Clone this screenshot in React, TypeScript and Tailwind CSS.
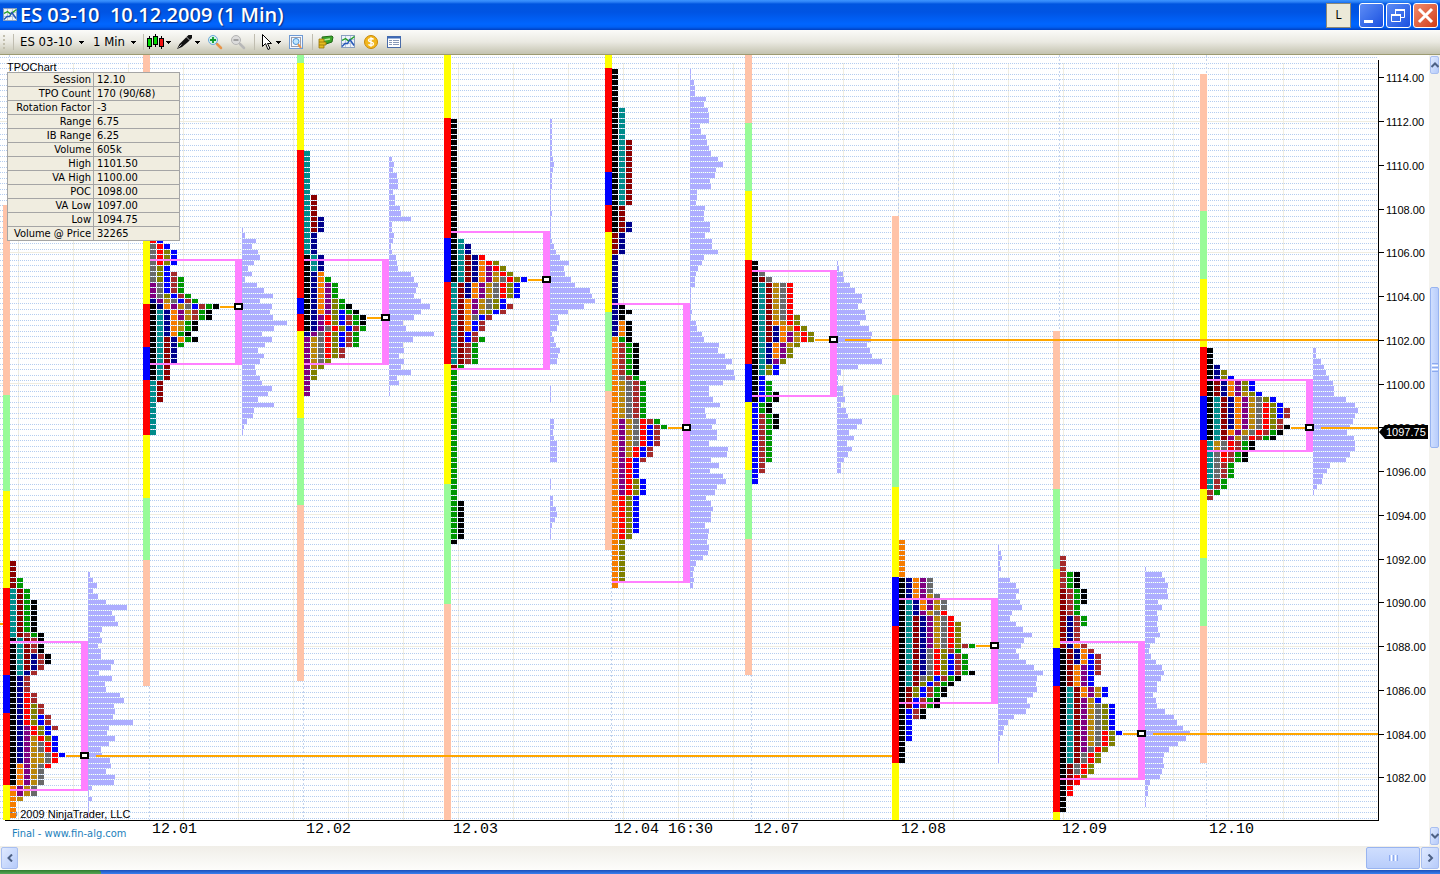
import type { ReactNode } from "react";

interface Session {
    label: string;
    x: number;
    strip: [string, number][];
    stripTop: number;
    firstRow: number;
    rows: string;
    volumeX: number;
    volumeRow: number;
    volume: number[];
    va: [number, number];
    pocRow: number;
    pocEnd?: number | string;
}

const TICK = 5.46875;
const BASE = 77.5;
const PLOT_TOP = 55;
const PLOT_BOTTOM = 820;

// one colour per half hour letter
const TPO: Record<string, string> = {
    K: "#000000",
    T: "#008b8b",
    M: "#8b0000",
    N: "#00008b",
    O: "#f57c00",
    P: "#800080",
    G: "#b8860b",
    S: "#696969",
    R: "#ff0000",
    L: "#808000",
    B: "#0000ff",
    W: "#a52a2a",
    E: "#009600",
};

const STRIP: Record<string, string> = {
    peach: "#ffc3a8",
    green: "#98fb98",
    yellow: "#ffff00",
    red: "#ff0000",
    blue: "#0000ff",
};

const SESSIONS: Session[] = [
    {
        label: "",
        x: 10,
        stripTop: 205,
        strip: [["peach", 395], ["green", 491], ["yellow", 588], ["red", 675], ["blue", 713], ["red", 785], ["yellow", 820]],
        firstRow: 89,
        rows: "M*3 ME*2 TME*2 TMEK*6 TMWEK KTMWK*3 KTMNWK*2 KTMNW KTNW KNW*3 KNRW*2 KNRLW*2 KNRLBW*2 KNPRLBW KNPRLB KNPGRLB KNPGSRB*2 KNPGGSRB KNPGGSR KOPGSR KOPGS*3 OPGS*2 OG O*3",
        volumeX: 88,
        volumeRow: 91,
        volume: [2, 5, 9, 5, 10, 18, 39, 24, 27, 30, 14, 12, 14, 10, 13, 13, 26, 23, 11, 24, 17, 18, 32, 36, 26, 27, 25, 45, 21, 19, 27, 21, 13, 14, 22, 23, 18, 27, 26, 4, 1, 4, 1, 1, 1],
        va: [641, 791],
        pocRow: 124,
        pocEnd: 892,
    },
    {
        label: "12.01",
        x: 150,
        stripTop: 55,
        strip: [["peach", 150], ["yellow", 304], ["red", 347], ["blue", 380], ["red", 435], ["yellow", 498], ["green", 560], ["peach", 686]],
        firstRow: 30,
        rows: "RB SRB SRLB*3 SLB SLBW SLBWE PSBWE*2 PSLBWE NPGSBWE KNOPGSBWEK KTNOPGWEK*2 KTNOGEK*2 KTNOEK KTMNOEK KTMNE KTMN*3 KTM*3 TM*4 T*6",
        volumeX: 242,
        volumeRow: 28,
        volume: [1, 3, 14, 10, 16, 18, 12, 6, 10, 3, 15, 22, 31, 18, 30, 28, 31, 45, 32, 20, 30, 23, 16, 22, 18, 13, 14, 18, 20, 30, 26, 16, 32, 12, 11, 5, 2, 1],
        va: [259, 365],
        pocRow: 42,
    },
    {
        label: "12.02",
        x: 304,
        stripTop: 55,
        strip: [["green", 63], ["yellow", 150], ["red", 298], ["blue", 314], ["red", 331], ["yellow", 418], ["green", 505], ["peach", 681]],
        firstRow: 14,
        rows: "T*8 TM*4 TMN*3 TN*4 KTN*3 KNO KNOE KNOPE*3 KNOPLE KNOPLEK KNOPLBEK KNPRLBWEK*2 KNPSRLBWE NPSRLBWE PGSRLBWE*2 PGSRLW*2 PGSL PGL PL*2 P*3",
        volumeX: 389,
        volumeRow: 15,
        volume: [3, 5, 4, 8, 9, 9, 4, 6, 6, 11, 12, 22, 3, 3, 5, 4, 2, 3, 7, 8, 9, 22, 25, 29, 27, 25, 32, 41, 32, 25, 14, 17, 45, 24, 14, 15, 10, 15, 12, 22, 8, 10, 1, 1],
        va: [259, 365],
        pocRow: 44,
    },
    {
        label: "12.03",
        x: 451,
        stripTop: 55,
        strip: [["yellow", 118], ["red", 238], ["blue", 282], ["red", 364], ["yellow", 484], ["green", 604], ["peach", 820]],
        firstRow: 8,
        rows: "K*22 KT KTN*2 KTMNR KTMNORL KTMNOPRL KTMNOPGRL KTMNOPGSRLB TMNOPGSRLB*3 TMOPGSLB TMOPGSLBW TMOPGLBW TMOSBW TMOBW*2 TMBW TMBWE TMWE*4 ME E*24 EK*7 K",
        volumeX: 550,
        volumeRow: 8,
        volume: [2, 2, 2, 2, 2, 2, 2, 3, 4, 3, 2, 2, 2, 1, 1, 1, 1, 2, 1, 1, 1, 1, 2, 4, 6, 10, 19, 14, 15, 21, 25, 40, 42, 45, 34, 18, 8, 9, 7, 2, 4, 6, 10, 8, 7, 0, 0, 0, 0, 1, 1, 1, 0, 0, 0, 4, 4, 3, 4, 7, 7, 7, 7, 0, 0, 0, 1, 1, 0, 3, 3, 6, 7, 5, 2, 1, 1],
        va: [231, 370],
        pocRow: 37,
    },
    {
        label: "12.04 16:30",
        x: 612,
        stripTop: 55,
        strip: [["yellow", 68], ["red", 172], ["blue", 205], ["red", 232], ["yellow", 312], ["green", 391], ["peach", 550]],
        firstRow: -1,
        rows: "K*7 KT*6 KTM*12 KM*3 KMN*2 MN*4 N*9 NK NKK NK NOK*3 OEK OWEK*6 OSWE OGSWE*7 OPGSRWE OPGSRBWE OPGSRBW*3 OPGRBW*2 OPRBW OPRB*3 OPRLB*3 ORLB*7 ORL OL*8 O",
        volumeX: 690,
        volumeRow: -1,
        volume: [1, 1, 4, 5, 5, 16, 14, 18, 19, 19, 10, 11, 16, 17, 19, 21, 28, 33, 26, 25, 20, 21, 7, 7, 6, 15, 14, 14, 20, 20, 15, 22, 22, 28, 14, 12, 8, 6, 5, 5, 1, 1, 1, 1, 2, 1, 6, 7, 12, 14, 29, 28, 35, 42, 36, 44, 45, 33, 19, 19, 23, 30, 15, 16, 26, 22, 27, 27, 19, 38, 37, 21, 29, 20, 33, 36, 27, 25, 16, 21, 23, 21, 21, 15, 19, 18, 17, 19, 18, 13, 6, 4, 3, 4, 3],
        va: [303, 583],
        pocRow: 64,
    },
    {
        label: "12.07",
        x: 752,
        stripTop: 55,
        strip: [["peach", 123], ["green", 191], ["yellow", 260], ["red", 364], ["blue", 402], ["yellow", 470], ["green", 539], ["peach", 675]],
        firstRow: 34,
        rows: "K*2 KS KMS KTMGSR*6 KTMGSRL KTMOGRL KTMNOGRL KTMNOPGRL*2 KTNOPGL KTNOPL*2 KTNPL KTLB*2 KB KBE*2 KBEK*2 BEK*2 BWEK*3 BWE*6 BW*2 B*2",
        volumeX: 837,
        volumeRow: 34,
        volume: [1, 2, 6, 7, 13, 18, 25, 25, 21, 28, 29, 23, 32, 35, 34, 30, 33, 35, 45, 21, 4, 1, 1, 6, 6, 8, 4, 9, 11, 25, 20, 12, 17, 10, 15, 11, 7, 4, 4],
        va: [270, 397],
        pocRow: 48,
        pocEnd: "100%",
    },
    {
        label: "12.08",
        x: 899,
        stripTop: 216,
        strip: [["peach", 395], ["green", 487], ["yellow", 577], ["blue", 626], ["red", 763], ["yellow", 820]],
        firstRow: 85,
        rows: "O*7 KNOPS*3 KNOPGS KTNOPGS*2 KTNPGSR KTMNPGSR KTMNPGSRL*4 KTMNPGSRLWE KTMNSRLWE KTMNSRLBWE*3 KTMNSRLBWEK KTMSLBWEK KTMLBWEK KMLBWEK*2 KMBWEK*2 KBWK*2 KB*4 K*4",
        volumeX: 998,
        volumeRow: 86,
        volume: [1, 3, 4, 2, 3, 1, 12, 18, 21, 18, 22, 24, 14, 12, 18, 25, 34, 26, 23, 18, 21, 28, 36, 45, 39, 38, 39, 35, 29, 32, 28, 16, 10, 6, 5, 2, 1, 1, 1, 1],
        va: [598, 704],
        pocRow: 104,
    },
    {
        label: "12.09",
        x: 1060,
        stripTop: 331,
        strip: [["peach", 489], ["green", 569], ["yellow", 648], ["blue", 686], ["red", 812], ["yellow", 820]],
        firstRow: 88,
        rows: "W*3 WEK*3 MWEK*3 MWE*2 MNWE*2 MNW*3 MNOW KMNOW KMNOBW*2 KMOPBW*2 KMOPB*2 KTMOPGB*2 KTMPGB KTMPGSLB*5 KTMPGSRLB KTMPGSRL*2 KTMPSRL KTMSRL*2 KMSRL*2 KMRL KMR KR*2 K*3",
        volumeX: 1145,
        volumeRow: 90,
        volume: [1, 17, 20, 23, 22, 23, 13, 17, 12, 13, 12, 13, 15, 10, 5, 4, 6, 11, 17, 19, 16, 12, 12, 8, 11, 12, 20, 29, 32, 38, 45, 41, 33, 24, 19, 18, 19, 17, 15, 5, 3, 3, 1, 1],
        va: [641, 780],
        pocRow: 120,
        pocEnd: "100%",
    },
    {
        label: "12.10",
        x: 1207,
        stripTop: 74,
        strip: [["peach", 211], ["green", 279], ["yellow", 347], ["red", 396], ["blue", 440], ["red", 489], ["yellow", 558], ["green", 626], ["peach", 763]],
        firstRow: 50,
        rows: "K*3 KN KNL KNLB KMNOPLB*2 KMNOPGLB KTMNOPGSLB KTMNOPGSRLB KTMNOPGSRLBW*2 KTMNOPGSRLW KTMNOPGSRLWK KTMOPGSRWEK KTMPGSRWEK TGSRWEK*2 TSRWEK*2 TSWE*3 TWE*2 WE W",
        volumeX: 1313,
        volumeRow: 50,
        volume: [3, 3, 8, 11, 13, 16, 20, 21, 21, 33, 42, 45, 42, 40, 37, 34, 41, 42, 42, 37, 33, 17, 14, 10, 9, 4, 1],
        va: [379, 452],
        pocRow: 64,
        pocEnd: "100%",
    },
];

const STATS = [
    ["Session", "12.10"],
    ["TPO Count", "170 (90/68)"],
    ["Rotation Factor", "-3"],
    ["Range", "6.75"],
    ["IB Range", "6.25"],
    ["Volume", "605k"],
    ["High", "1101.50"],
    ["VA High", "1100.00"],
    ["POC", "1098.00"],
    ["VA Low", "1097.00"],
    ["Low", "1094.75"],
    ["Volume @ Price", "32265"],
];

const TAHOMA = "font-['DejaVu_Sans_Condensed','Noto_Sans',sans-serif]";
const ARIAL = "font-['Liberation_Sans',Arial,sans-serif]";

const rowTop = (row: number) => Math.round(BASE + (row - 0.5) * TICK);
const rowHeight = (row: number) => rowTop(row + 1) - rowTop(row) - 1;

function expandRows(rows: string) {
    return rows.split(" ").flatMap((part) => {
        const [letters, count] = part.split("*");
        return Array<string>(Number(count ?? 1)).fill(letters);
    });
}

function Grid() {
    const ticks = Array.from({ length: 140 }, (_, i) => rowTop(i - 3) - 1);
    const columns = Array.from({ length: 50 }, (_, i) => 18 + 55 * i);
    const prices = Array.from({ length: 6 }, (_, i) => rowTop(8 + 24 * i) + 2);

    return (
        <g shapeRendering="crispEdges">
            {columns.map((x) => <rect key={x} x={x} y={63} width={1} height={PLOT_BOTTOM - 63} fill="#f0ede0" />)}
            {prices.map((y) => <rect key={y} x={0} y={y} width="100%" height={1} fill="#f0ede0" />)}
            {ticks.filter((y) => y < PLOT_BOTTOM).map((y) => (
                <line key={y} x1={0} x2="100%" y1={y + 0.5} y2={y + 0.5} stroke="#b4cdf0" strokeDasharray="1 1" />
            ))}
            {SESSIONS.map((s) => (
                <line key={s.x} x1={s.x - 0.5} x2={s.x - 0.5} y1={PLOT_TOP} y2={PLOT_BOTTOM} stroke="#c3d3ec" strokeDasharray="2 2" />
            ))}
        </g>
    );
}

function Profile({ session }: { session: Session }) {
    const { x, strip, stripTop, firstRow, volumeX, volumeRow, volume, va, pocRow } = session;
    const rows = expandRows(session.rows);
    const pocY = Math.round(BASE + pocRow * TICK);

    return (
        <g shapeRendering="crispEdges">
            {strip.map(([color, end], i) => {
                const start = i === 0 ? stripTop : strip[i - 1][1];
                return <rect key={end} x={x - 7} y={start} width={7} height={end - start} fill={STRIP[color]} />;
            })}
            {rows.map((letters, i) =>
                letters.split("").map((letter, j) => (
                    <rect
                        key={`${i}-${j}`}
                        x={x + j * 7}
                        y={rowTop(firstRow + i)}
                        width={6}
                        height={rowHeight(firstRow + i)}
                        fill={TPO[letter]}
                    />
                ))
            )}
            {volume.map((width, i) => (
                <rect
                    key={i}
                    x={volumeX}
                    y={rowTop(volumeRow + i)}
                    width={width}
                    height={rowHeight(volumeRow + i)}
                    fill="#adadff"
                />
            ))}
            <rect x={x} y={va[0]} width={volumeX - x} height={2} fill="#ff80ff" />
            <rect x={x} y={va[1] - 2} width={volumeX - x} height={2} fill="#ff80ff" />
            <rect x={volumeX - 7} y={va[0]} width={7} height={va[1] - va[0]} fill="#ff80ff" />
            <rect
                x={x + rows[pocRow - firstRow].length * 7}
                y={pocY - 1}
                width={volumeX - 7 - x - rows[pocRow - firstRow].length * 7}
                height={2}
                fill="#ffa500"
            />
            <rect x={volumeX - 8} y={pocY - 4} width={9} height={7} fill="#000" />
            <rect x={volumeX - 6} y={pocY - 2} width={5} height={3} fill="#fff" />
        </g>
    );
}

function Plot() {
    return (
        <svg className="block w-full h-full" role="img" aria-label="TPO chart">
            <g transform={`translate(0 ${-PLOT_TOP})`}>
                <Grid />
                <rect x={0} y={623} width={3} height={2} fill="#ffa500" />
                <text x={7} y={71} className={`${ARIAL} text-[11px]`}>TPOChart</text>
                <text x={9} y={818} className={`${ARIAL} text-[11px]`}>© 2009 NinjaTrader, LLC</text>
                {SESSIONS.map((s) => <Profile key={s.x} session={s} />)}
                {SESSIONS.filter((s) => s.pocEnd).map((s) => {
                    const y = Math.round(BASE + s.pocRow * TICK);
                    return <line key={s.x} x1={s.volumeX + 8} x2={s.pocEnd} y1={y} y2={y} stroke="#ffa500" strokeWidth={2} shapeRendering="crispEdges" />;
                })}
                <text x={12} y={837} className={`${TAHOMA} text-[11px]`} fill="#1c80bb">Final - www.fin-alg.com</text>
                <rect x={5} y={PLOT_BOTTOM} width="100%" height={1} fill="#000" />
                {SESSIONS.map((s) => (
                    <text key={s.x} x={s.x + 2} y={833} className="font-['Liberation_Mono',monospace] text-[15px]">{s.label}</text>
                ))}
            </g>
        </svg>
    );
}

function PriceAxis() {
    const labels = Array.from({ length: 17 }, (_, i) => ({
        price: 1114 - i * 2,
        y: Math.round(BASE - 0.1 + i * 8 * TICK),
    }));

    return (
        <svg className="block w-[51px] shrink-0 h-full" role="img" aria-label="Price axis">
            <g transform={`translate(0 ${-PLOT_TOP})`} className={`${ARIAL} text-[11px]`}>
                <rect x={0} y={60} width={1} height={761} fill="#000" />
                {labels.map(({ price, y }) => (
                    <g key={price}>
                        <rect x={0} y={y} width={6} height={1} fill="#000" />
                        <text x={8} y={y + 5}>{price.toFixed(2)}</text>
                    </g>
                ))}
                <path d="M1 432 L7 425 H50 V439 H7 Z" fill="#000" />
                <text x={8} y={436} fill="#fff">1097.75</text>
            </g>
        </svg>
    );
}

function StatsTable() {
    return (
        <table className={`absolute left-[7px] top-[17px] w-[173px] table-fixed border-collapse bg-[#f0ede0] text-[11px] leading-[13px] text-black ${TAHOMA}`}>
            <tbody>
                {STATS.map(([name, value]) => (
                    <tr key={name} className="h-[14px]">
                        <th scope="row" className="w-[86px] border border-[#a5a5a5] p-0 pr-[2px] text-right font-normal whitespace-nowrap">{name}</th>
                        <td className="border border-[#a5a5a5] p-0 pl-[3px] whitespace-nowrap">{value}</td>
                    </tr>
                ))}
            </tbody>
        </table>
    );
}

function Caret() {
    return (
        <svg width="5" height="3" viewBox="0 0 5 3" className="shrink-0 pointer-events-none" shapeRendering="crispEdges">
            <path d="M0 0h5v1h-1v1h-1v1h-1v-1h-1v-1h-1z" />
        </svg>
    );
}

function Separator({ className }: { className: string }) {
    return <div className={`h-4 w-px shrink-0 bg-[#c0bdb0] ${className}`} />;
}

function ToolButton({ label, className = "", children }: { label: string; className?: string; children: ReactNode }) {
    return (
        <button type="button" aria-label={label} className={`flex shrink-0 items-center gap-[2px] ${className}`}>
            {children}
        </button>
    );
}

function ChartIcon() {
    return (
        <svg width="16" height="16" viewBox="0 0 16 16" className="shrink-0">
            <rect x="1.500" y="1.500" width="13" height="12" fill="#eef3fa" stroke="#8aa0bf" />
            <path d="M2 5.500h12M2 9.500h12M5.500 2v11M10.500 2v11" stroke="#b9c8dc" fill="none" />
            <path d="M2 6.500l3.500-2 3 2.500 6-4.500" stroke="#22a022" strokeWidth="1.400" fill="none" />
            <path d="M2 12.500l3-3 2.500 0 2.500-4 4 6" stroke="#2456b8" strokeWidth="1.400" fill="none" />
        </svg>
    );
}

function Magnifier({ sign, muted }: { sign: "plus" | "minus"; muted?: boolean }) {
    return (
        <svg width="16" height="16" viewBox="0 0 16 16">
            <path d="M10 10l4 4" stroke={muted ? "#b8b8b8" : "#e8954a"} strokeWidth="2.500" strokeLinecap="round" />
            <circle cx="6" cy="6" r="4.500" fill={muted ? "#dcdcdc" : "#d5f3e6"} stroke={muted ? "#b4b4b4" : "#6aa8dd"} />
            <path d={sign === "plus" ? "M3 6h6M6 3v6" : "M3.500 6h5"} stroke={muted ? "#999" : "#0c9a2c"} strokeWidth="1.800" />
        </svg>
    );
}

function Toolbar() {
    return (
        <div className={`flex h-[25px] shrink-0 items-center overflow-hidden border-b border-[#9c9b72] bg-linear-to-b from-[#fbfbf9] via-[#eae9e1] to-[#c4c3b0] pl-[3px] text-[13px] text-black ${TAHOMA}`}>
            <svg width="3" height="14" viewBox="0 0 3 14" className="shrink-0" fill="#c2bfae">
                <path d="M0 0h2v2h-2zM0 4h2v2h-2zM0 8h2v2h-2zM0 12h2v2h-2z" />
            </svg>
            <Separator className="ml-[7px]" />
            <label className="flex w-[73px] shrink-0 items-center pl-[6px]">
                <select aria-label="Instrument" className="w-[59px] appearance-none bg-transparent">
                    <option>ES 03-10</option>
                </select>
                <Caret />
            </label>
            <label className="flex w-[52px] shrink-0 items-center pl-[6px]">
                <select aria-label="Interval" className="w-[38px] appearance-none bg-transparent">
                    <option>1 Min</option>
                </select>
                <Caret />
            </label>
            <Separator className="ml-1" />
            <ToolButton label="Chart style" className="ml-[3px]">
                <svg width="17" height="16" viewBox="0 0 17 16">
                    <path d="M2.500 2v13M8.500 0v13M14.500 2v13" stroke="#000" />
                    <rect x="0.500" y="4.500" width="4" height="8" fill="#00d800" stroke="#000" />
                    <rect x="6.500" y="2.500" width="4" height="8" fill="#00d800" stroke="#000" />
                    <rect x="12.500" y="4.500" width="4" height="8" fill="#f01010" stroke="#000" />
                </svg>
                <Caret />
            </ToolButton>
            <ToolButton label="Drawing tools" className="ml-[6px]">
                <svg width="16" height="16" viewBox="0 0 16 16">
                    <path d="M0 15l2.500-5 6-6 3-3 3.500 0 0 3-4 4-6 5z" fill="#111" />
                    <path d="M1.500 13.500l3-3M9.500 3l3.500 3.500" stroke="#ddd" strokeWidth="0.800" />
                </svg>
                <Caret />
            </ToolButton>
            <ToolButton label="Zoom in" className="ml-[7px]"><Magnifier sign="plus" /></ToolButton>
            <ToolButton label="Zoom out" className="ml-[7px]"><Magnifier sign="minus" muted /></ToolButton>
            <Separator className="ml-2" />
            <ToolButton label="Pointer" className="ml-[6px]">
                <svg width="13" height="16" viewBox="0 0 13 16">
                    <path d="M1.500 0.500v12l3-3 2.500 6 2-1-2.500-5h4z" fill="#fff" stroke="#000" />
                </svg>
                <Caret />
            </ToolButton>
            <ToolButton label="Zoom frame" className="ml-[7px]">
                <svg width="16" height="16" viewBox="0 0 16 16">
                    <rect x="1.500" y="1.500" width="13" height="13" fill="#f4f8ff" stroke="#6f9ad4" />
                    <path d="M3.500 3.500h9v9h-9z" fill="none" stroke="#445" strokeDasharray="1 1" />
                    <circle cx="8" cy="7.500" r="3" fill="#bfe6ff" stroke="#4a93d8" />
                    <path d="M10 10l3 4" stroke="#e8954a" strokeWidth="2" />
                </svg>
            </ToolButton>
            <Separator className="ml-2" />
            <ToolButton label="Chart trader" className="ml-[5px]">
                <svg width="16" height="16" viewBox="0 0 16 16">
                    <path d="M4 3l10-1 1 1-1 5-9 3z" fill="#3aa52a" stroke="#226b18" />
                    <path d="M6 6l6-1" stroke="#b8ec9a" strokeWidth="1.500" />
                    <path d="M1 5h5v3h2v3h-2v3h-5z" fill="#e5bd22" stroke="#987408" strokeWidth="0.800" />
                    <path d="M1 8h5M1 11h5" stroke="#987408" strokeWidth="0.800" />
                </svg>
            </ToolButton>
            <ToolButton label="Indicators" className="ml-[6px]"><ChartIcon /></ToolButton>
            <ToolButton label="Strategies" className="ml-[7px]">
                <svg width="16" height="16" viewBox="0 0 16 16">
                    <circle cx="8" cy="8" r="6.500" fill="#f2b61c" stroke="#c98908" />
                    <path d="M10.500 5.500c-1-1.500-5-1.200-5 .8 0 2.200 5 1 5 3.400 0 2-4 2.200-5 .6M8 3.200v9.600" stroke="#fff" strokeWidth="1.400" fill="none" />
                </svg>
            </ToolButton>
            <ToolButton label="Properties" className="ml-[7px]">
                <svg width="16" height="16" viewBox="0 0 16 16">
                    <rect x="1.500" y="2.500" width="13" height="11" fill="#fff" stroke="#4a6ca8" />
                    <path d="M1 3.500h14" stroke="#3d69b5" strokeWidth="2" />
                    <path d="M3 6.500h3M3 8.500h3M3 10.500h3M7 6.500h6M7 8.500h6M7 10.500h6" stroke="#8899b8" />
                </svg>
            </ToolButton>
        </div>
    );
}

function TitleBar() {
    const button = "flex size-[25px] items-center justify-center rounded-[3px] border border-white";

    return (
        <header className="flex h-[30px] shrink-0 items-center bg-[linear-gradient(#3d95ff_0,#2a7ff5_2px,#0055e0_4px,#0054e3_12px,#0066ff_24px,#0060f5_27px,#0040c0_30px)] pl-[2px] pr-[2px]">
            <ChartIcon />
            <h1 className="ml-[2px] flex-1 truncate font-['Open_Sans','Noto_Sans',sans-serif] text-[20px] leading-[28px] font-semibold whitespace-pre text-white [text-shadow:1px_1px_1px_#0a2a80]">
                ES 03-10  10.12.2009 (1 Min)
            </h1>
            <button type="button" className={`mr-2 size-[25px] border border-[#8b8878] bg-[#ece9d8] text-[12px] text-black ${TAHOMA}`}>L</button>
            <div className="flex gap-[2px]">
                <button type="button" aria-label="Minimize" className={`${button} bg-linear-to-br from-[#5d8cf5] to-[#1a4fe0]`}>
                    <svg width="19" height="19" viewBox="0 0 19 19"><rect x="2" y="14" width="9" height="3" fill="#fff" /></svg>
                </button>
                <button type="button" aria-label="Restore" className={`${button} bg-linear-to-br from-[#5d8cf5] to-[#1a4fe0]`}>
                    <svg width="19" height="19" viewBox="0 0 19 19" fill="none" stroke="#fff">
                        <path d="M6.500 8V3.500h9V11.500h-4" />
                        <path d="M6 4h10M2 9h10" strokeWidth="2" />
                        <path d="M2.500 8.500h9v7h-9z" />
                    </svg>
                </button>
                <button type="button" aria-label="Close" className={`${button} bg-linear-to-br from-[#f08a6c] to-[#d03a10]`}>
                    <svg width="19" height="19" viewBox="0 0 19 19"><path d="M3 3l13 13M16 3l-13 13" stroke="#fff" strokeWidth="3" /></svg>
                </button>
            </div>
        </header>
    );
}

function ScrollButton({ label, path, className }: { label: string; path: string; className: string }) {
    return (
        <button type="button" aria-label={label} className={`flex shrink-0 items-center justify-center rounded-[2px] border border-[#a9bff0] bg-linear-to-br from-[#e0eaff] to-[#b6cbfa] ${className}`}>
            <svg width="8" height="8" viewBox="0 0 8 8" className="shrink-0"><path d={path} stroke="#4d6185" strokeWidth="2" fill="none" /></svg>
        </button>
    );
}

function App() {
    return (
        <div className="flex h-screen flex-col overflow-hidden bg-white">
            <TitleBar />
            <Toolbar />
            <main className="flex min-h-0 flex-1">
                <div className="relative min-w-0 flex-1 overflow-hidden">
                    <Plot />
                    <StatsTable />
                </div>
                <PriceAxis />
                <div className="flex w-[11px] shrink-0 flex-col items-center bg-[#f4f3ee]">
                    <ScrollButton label="Scroll up" path="M0.500 6L4 2.500 7.500 6" className="mt-px h-[18px] w-[9px]" />
                    <div className="h-[213px] shrink-0" />
                    <div className="flex h-[161px] w-[9px] shrink-0 flex-col items-center justify-center gap-px rounded-[2px] border border-[#98b4f0] bg-linear-to-r from-[#cfdefe] to-[#b8cdfb]">
                        <div className="h-px w-[6px] bg-[#8caaf0]" />
                        <div className="h-px w-[6px] bg-white" />
                        <div className="h-px w-[6px] bg-[#8caaf0]" />
                        <div className="h-px w-[6px] bg-white" />
                        <div className="h-px w-[6px] bg-[#8caaf0]" />
                    </div>
                    <div className="flex-1" />
                    <ScrollButton label="Scroll down" path="M0.500 2L4 5.500 7.500 2" className="mb-px h-[18px] w-[9px]" />
                </div>
            </main>
            <div className="flex h-6 shrink-0 items-center bg-linear-to-b from-[#f0eee8] to-[#fdfdfb] px-px">
                <ScrollButton label="Scroll left" path="M6 0.500L2.500 4 6 7.500" className="h-[22px] w-[17px]" />
                <div className="flex-1" />
                <div className="flex h-[22px] w-[54px] items-center justify-center gap-px rounded-[2px] border border-[#98b4f0] bg-linear-to-b from-[#cfdefe] to-[#b8cdfb]">
                    <div className="h-[6px] w-px bg-[#8caaf0]" />
                    <div className="h-[6px] w-px bg-white" />
                    <div className="h-[6px] w-px bg-[#8caaf0]" />
                    <div className="h-[6px] w-px bg-white" />
                    <div className="h-[6px] w-px bg-[#8caaf0]" />
                </div>
                <ScrollButton label="Scroll right" path="M2.500 0.500L6 4 2.500 7.500" className="ml-px h-[22px] w-[18px]" />
            </div>
            <footer className="flex h-1 shrink-0 bg-linear-to-b from-[#1c4fb8] to-[#3a80f0]">
                <div className="w-[101px] rounded-tr-[3px] bg-linear-to-b from-[#2f7a2f] to-[#57a857]" />
            </footer>
        </div>
    );
}

export default App;
